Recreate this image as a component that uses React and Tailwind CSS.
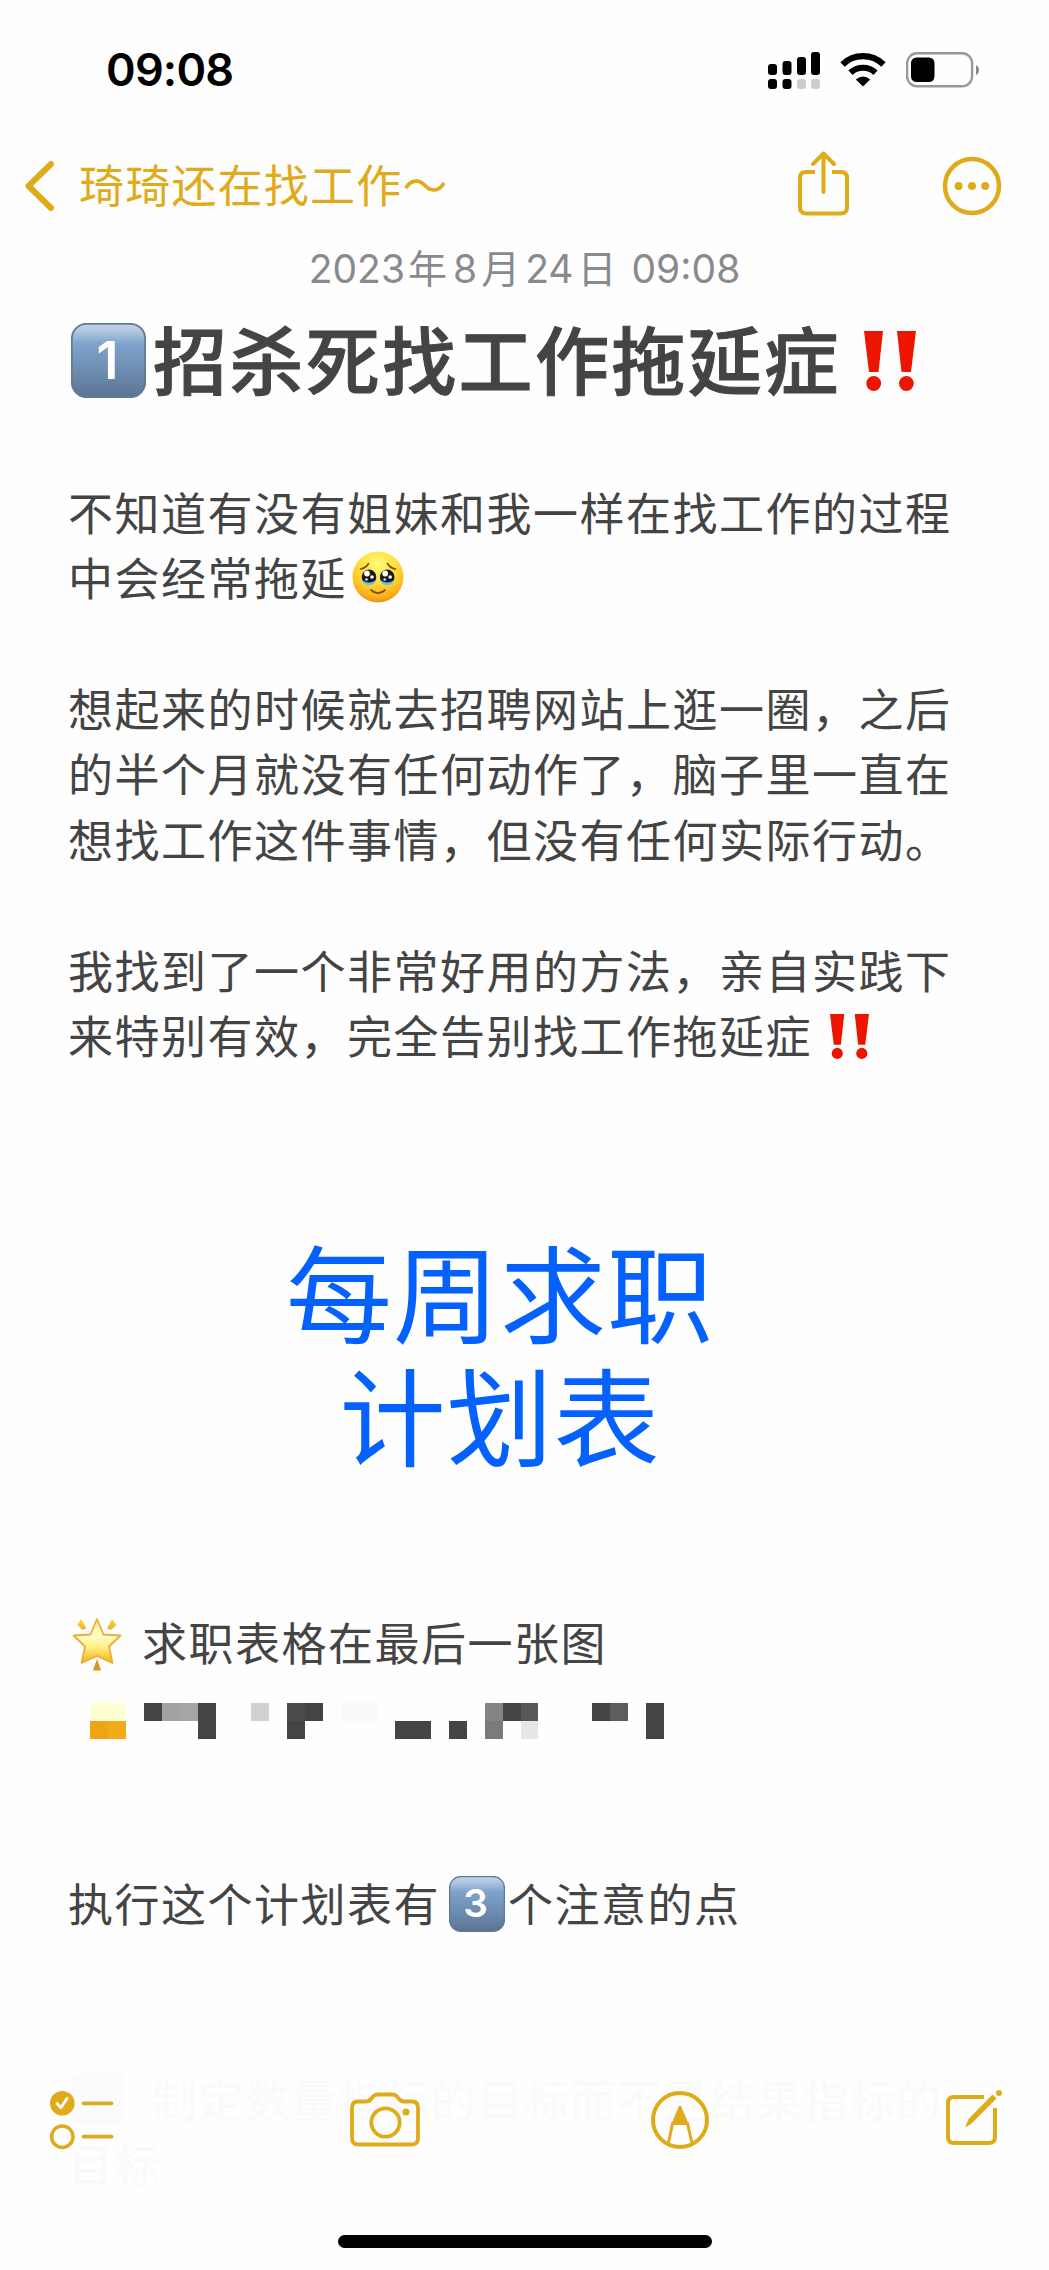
import { useId } from 'react';

const INTRO = [
  ['不知道有没有姐妹和我一样在找工作的过程'],
  ['中会经常拖延', 'tearful'],
  [],
  ['想起来的时候就去招聘网站上逛一圈，之后'],
  ['的半个月就没有任何动作了，脑子里一直在'],
  ['想找工作这件事情，但没有任何实际行动。'],
  [],
  ['我找到了一个非常好用的方法，亲自实践下'],
  ['来特别有效，完全告别找工作拖延症', 'bangs'],
];

// column, row, rows spanned, colour
const MOSAIC = [
  [0, 0, 1, '#ffffd2'],
  [1, 0, 1, '#ffffd6'],
  [0, 1, 1, '#eda514'],
  [1, 1, 1, '#f2ab18'],
  [3, 0, 1, '#444444'],
  [4, 0, 1, '#a2a2a2'],
  [5, 0, 1, '#a6a6a6'],
  [6, 0, 2, '#444444'],
  [9, 0, 1, '#d1d1d1'],
  [11, 0, 1, '#4b4b4b'],
  [12, 0, 1, '#444444'],
  [11, 1, 1, '#444444'],
  [14, 0, 1, '#f9f9f9'],
  [15, 0, 1, '#f9f9f9'],
  [17, 1, 1, '#444444'],
  [18, 1, 1, '#444444'],
  [20, 1, 1, '#444444'],
  [22, 0, 1, '#848484'],
  [23, 0, 1, '#444444'],
  [24, 0, 1, '#585858'],
  [22, 1, 1, '#7b7b7b'],
  [24, 1, 1, '#e7e7e7'],
  [28, 0, 1, '#444444'],
  [29, 0, 1, '#5d5d5d'],
  [31, 0, 2, '#444444'],
];

function Keycap({ digit, className }) {
  const id = useId();
  return (
    <svg viewBox="0 0 75 75" className={className}>
      <defs>
        <linearGradient id={id} x1="0" y1="0" x2="0" y2="1">
          <stop offset="0" stopColor="#c3d4e8" />
          <stop offset="0.1" stopColor="#b1c6df" />
          <stop offset="0.27" stopColor="#80a3cc" />
          <stop offset="0.6" stopColor="#6f8fb4" />
          <stop offset="1" stopColor="#5b7590" />
        </linearGradient>
      </defs>
      <rect x="0.8" y="0.8" width="73.4" height="73.4" rx="15" fill={`url(#${id})`} stroke="#5f7a99" strokeWidth="1.8" />
      <text x="36.5" y="55.5" textAnchor="middle" fill="#fff" fontFamily="Inter" fontWeight="600" fontSize="52">
        {digit}
      </text>
    </svg>
  );
}

function Bangs({ className }) {
  return (
    <svg viewBox="0 0 52 60" fill="#ed1500" className={className}>
      <path d="M0 0H19L14.5 41H5Z" />
      <circle cx="9.7" cy="52.5" r="7.4" />
      <path d="M33 0H52L47 41H37.5Z" />
      <circle cx="42.4" cy="52.5" r="7.4" />
    </svg>
  );
}

function TearfulFace({ className }) {
  return (
    <svg viewBox="0 0 52 52" className={className}>
      <defs>
        <radialGradient id="face" cx="0.5" cy="0.25" r="0.78">
          <stop offset="0" stopColor="#fffb7a" />
          <stop offset="0.45" stopColor="#ffdf3d" />
          <stop offset="0.8" stopColor="#fcb421" />
          <stop offset="1" stopColor="#ea8a12" />
        </radialGradient>
      </defs>
      <circle cx="26" cy="26" r="25.5" fill="url(#face)" />
      <path d="M8.5 18Q14 17 16.5 12.5M43.5 18Q38 17 35.5 12.5" fill="none" stroke="#7c4a0b" strokeWidth="1.6" strokeLinecap="round" />
      {[17, 35.2].map((cx) => (
        <g key={cx}>
          <ellipse cx={cx} cy="26" rx="7.3" ry="7.4" fill="#1b1918" />
          <path d={`M${cx - 7} 29Q${cx} 34 ${cx + 7} 29Q${cx + 6} 34 ${cx} 34.3Q${cx - 6} 34 ${cx - 7} 29Z`} fill="#5cc7ef" />
          <circle cx={cx - 2} cy="22.5" r="2.9" fill="#fff" />
          <circle cx={cx + 3} cy="26" r="1.8" fill="#fff" />
          <circle cx={cx - 2.5} cy="28.5" r="1.3" fill="#d8eefc" />
        </g>
      ))}
      <path d="M19 39Q26 45.5 33 39" fill="none" stroke="#8a4b05" strokeWidth="1.8" strokeLinecap="round" />
    </svg>
  );
}

function GlowingStar({ className }) {
  return (
    <svg viewBox="0 0 50 54" className={className}>
      <defs>
        <linearGradient id="star" x1="0" y1="0" x2="0" y2="1">
          <stop offset="0" stopColor="#fff3a0" />
          <stop offset="0.4" stopColor="#fffbc8" />
          <stop offset="0.65" stopColor="#fff07c" />
          <stop offset="1" stopColor="#f5ae20" />
        </linearGradient>
        <linearGradient id="ray" x1="0" y1="0" x2="0" y2="1">
          <stop offset="0" stopColor="#fdd835" />
          <stop offset="1" stopColor="#e8b42c" />
        </linearGradient>
      </defs>
      <path
        d="M25 2L31.5 17.5L48.5 18.5L37 29.5L40.5 46L25 39L9.5 46L13 29.5L1.5 18.5L18.500 17.500Z"
        fill="url(#star)"
        stroke="#ecae35"
        strokeWidth="1.8"
        strokeLinejoin="round"
      />
      <path d="M9 2L14.5 11.5L10.5 13L5.5 8Z" fill="url(#ray)" />
      <path d="M40 2L35 11.5L39 13L44.5 8Z" fill="url(#ray)" />
      <path d="M25 42L29 53.5H21Z" fill="#e58e1c" />
    </svg>
  );
}

function SignalIcon() {
  return (
    <svg viewBox="0 0 52 37" className="h-[37px] w-[52px]">
      <rect x="0" y="12" width="9" height="11" rx="3" />
      <rect x="14.5" y="9" width="9" height="14" rx="3" />
      <rect x="29" y="5" width="9" height="18" rx="3" />
      <rect x="43" y="0" width="9" height="23" rx="3" />
      <rect x="0" y="27" width="9" height="10" rx="3" />
      <rect x="14.5" y="27" width="9" height="10" rx="3" />
      <rect x="29" y="27" width="9" height="10" rx="3" fill="#cccccc" />
      <rect x="43" y="27" width="9" height="10" rx="3" fill="#cccccc" />
    </svg>
  );
}

function WifiIcon() {
  return (
    <svg viewBox="0 0 46 34" className="h-[34px] w-[46px]">
      <path d="M2.500 11.500A29.500 29.500 0 0 1 43.500 11.500" fill="none" stroke="#000" strokeWidth="6.200" />
      <path d="M10.500 19.800A18 18 0 0 1 35.500 19.800" fill="none" stroke="#000" strokeWidth="6.200" />
      <path d="M15.800 26.500Q23 20.500 30.200 26.500L23 33.500Z" />
    </svg>
  );
}

function BatteryIcon() {
  return (
    <svg viewBox="0 0 74 36" className="h-9 w-[74px]">
      <rect x="1.1" y="1.3" width="65" height="33" rx="10" fill="none" stroke="#999" strokeWidth="2.4" />
      <rect x="5" y="5.5" width="23.500" height="24.500" rx="5.5" />
      <path d="M70 13Q73 14.500 73 18T70 23Z" fill="#888" />
    </svg>
  );
}

function StatusBar() {
  return (
    <div className="flex h-[140px] items-center pr-[69px] pl-[106px]">
      <span className="font-[Inter] text-[45px] font-semibold tracking-[-0.8px] text-black">09:08</span>
      <div className="ml-auto flex items-center">
        <SignalIcon />
        <span className="ml-5 flex">
          <WifiIcon />
        </span>
        <span className="ml-5 flex">
          <BatteryIcon />
        </span>
      </div>
    </div>
  );
}

function NavBar() {
  return (
    <div className="flex h-[92px] items-center pr-[47px] pl-[25px] text-[#e0ab1a]">
      <svg viewBox="0 0 30 52" className="h-[52px] w-[30px]" fill="none" stroke="currentColor" strokeWidth="6" strokeLinecap="round" strokeLinejoin="round">
        <path d="M26 4L3.500 26L26 48" />
      </svg>
      <span className="mb-[4px] ml-[24px] text-[45px] tracking-[1.2px] whitespace-nowrap">琦琦还在找工作～</span>
      <svg viewBox="0 0 52 66" className="mb-[4px] ml-auto h-[66px] w-[52px]" fill="none" stroke="currentColor" strokeWidth="4" strokeLinecap="round" strokeLinejoin="round">
        <path d="M17 21H8Q2 21 2 27V56Q2 62.500 8 62.500H43Q49 62.500 49 56V27Q49 21 43 21H34" strokeLinecap="butt" />
        <path d="M25.500 41V3M15 13L25.500 2.500L36 13" />
      </svg>
      <svg viewBox="0 0 60 60" className="ml-[92px] size-[60px]" fill="currentColor">
        <circle cx="30" cy="30" r="27" fill="none" stroke="currentColor" strokeWidth="4.500" />
        <circle cx="16.600" cy="30" r="4" />
        <circle cx="30" cy="30" r="4" />
        <circle cx="43.300" cy="30" r="4" />
      </svg>
    </div>
  );
}

function Line({ children, className = '' }) {
  return <div className={`flex h-[65.4px] items-center pb-[3px] leading-[60px] whitespace-nowrap ${className}`}>{children}</div>;
}

function Toolbar() {
  return (
    <div className="absolute inset-x-0 bottom-0 flex h-[200px] flex-col text-[#e0ab1a]">
      <div className="flex h-[100px] items-center justify-between pr-[47px] pl-[49px]">
        <svg viewBox="0 0 66 60" className="h-[60px] w-[66px]" fill="none" stroke="currentColor" strokeWidth="3.800" strokeLinecap="round" strokeLinejoin="round">
          <circle cx="13.300" cy="13.300" r="12.300" fill="currentColor" stroke="none" />
          <path d="M8 13.500L11.800 17.800L18 8.500" stroke="#fff" strokeWidth="2.800" />
          <circle cx="13.300" cy="46.700" r="10.700" strokeWidth="3.500" />
          <path d="M34.500 13.300H62.500M34.500 46.700H62.500" />
        </svg>
        <svg viewBox="0 0 70 56" className="mr-[-5px] ml-[1px] h-[56px] w-[70px]" fill="none" stroke="currentColor" strokeWidth="3.800">
          <path d="M2 16Q2 9.500 8 9.500H16Q19 9.500 21 7L23.500 4Q25 2.500 28 2.500H42Q45 2.500 46.500 4L49 7Q51 9.500 54 9.500H62Q68 9.500 68 16V46Q68 52.500 62 52.500H8Q2 52.500 2 46Z" />
          <circle cx="35.500" cy="30.500" r="14.200" />
          <circle cx="56" cy="20" r="3.500" fill="currentColor" stroke="none" />
        </svg>
        <svg viewBox="0 0 60 60" className="ml-[2px] size-[60px]" fill="none" stroke="currentColor" strokeWidth="4">
          <circle cx="30" cy="30" r="27" />
          <path d="M18.500 53L22.500 33.500H37.500L42 53" strokeWidth="3" />
          <path d="M30 15.500Q31 15.500 31.500 17L38 32.500V34H22V32.500L28.500 17Q29 15.500 30 15.500Z" fill="currentColor" stroke="none" />
        </svg>
        <svg viewBox="0 0 60 60" className="-mr-[2px] size-[60px]" fill="none" stroke="currentColor" strokeWidth="4">
          <path d="M40 7H10Q4 7 4 13V47Q4 53 10 53H45Q51 53 51 47V18" />
          <path d="M48.500 4.500L52.500 8.500L27 34L21 37.500L24.500 29Z" fill="currentColor" stroke="none" />
          <circle cx="55" cy="3" r="3" fill="currentColor" stroke="none" />
        </svg>
      </div>
      <div className="mx-auto mt-[65px] h-[13px] w-[374px] rounded-full bg-black" />
    </div>
  );
}

export default function App() {
  return (
    <div className="relative h-[2270px] w-[1049px] overflow-hidden bg-[#fefefe] font-['Noto_Sans_CJK_SC',sans-serif] text-[#444444]">
      <StatusBar />
      <NavBar />
      <div className="flex h-[74px] items-center justify-center font-[Inter,'Noto_Sans_CJK_SC',sans-serif] text-[39px] text-[#8a8a8e]">
        <span>
          2023<span className="mr-[6px] ml-[3px]">年</span>8<span className="mr-[5px] ml-[4px]">月</span>24
          <span className="mr-[4px] ml-[4px]">日</span> 09:08
        </span>
      </div>
      <h1 className="flex h-[106px] items-center pl-[71px] text-[74px] font-medium whitespace-nowrap">
        <Keycap digit="1" className="mt-[2px] size-[75px]" />
        <span className="mb-[6px] ml-[7px] tracking-[2.4px] [-webkit-text-stroke:1px_#444444]">招杀死找工作拖延症</span>
        <Bangs className="mt-[3px] ml-[23px] h-[60px] w-[52px]" />
      </h1>

      <main className="pl-[68px] text-[45px] tracking-[1.5px]">
        <div className="pt-[68.6px]">
          {INTRO.map(([text, emoji], i) => (
            <Line key={i}>
              {text}
              {emoji === 'tearful' && <TearfulFace className="ml-[5px] size-[52px]" />}
              {emoji === 'bangs' && <Bangs className="mt-[3px] ml-[18px] h-[45px] w-[39px]" />}
            </Line>
          ))}
        </div>

        <div className="mt-[159px] mb-[137px] -ml-[68px] w-[1000px] text-center text-[106px] leading-[123px] tracking-[1px] text-[#0561fe]">
          <p>每周求职</p>
          <p>计划表</p>
        </div>

        <Line>
          <GlowingStar className="mt-[3px] ml-[4px] h-[54px] w-[50px]" />
          <span className="ml-[20px]">求职表格在最后一张图</span>
        </Line>
        <div className="mt-[26px] ml-[22px] grid h-9 w-[574px] grid-cols-[repeat(32,1fr)] grid-rows-2">
          {MOSAIC.map(([col, row, span, color]) => (
            <div
              key={`${col}-${row}`}
              style={{ gridColumn: col + 1, gridRow: `${row + 1} / span ${span}`, backgroundColor: color }}
            />
          ))}
        </div>
        <Line className="mt-[133px]">
          执行这个计划表有
          <Keycap digit="3" className="mt-[3px] ml-[9px] size-[56px]" />
          <span className="ml-[3px]">个注意的点</span>
        </Line>
        <div className="mt-[131px] text-[#fafafa]">
          <Line>
            <span className="ml-[4px] size-[52px] rounded-lg bg-[#fbfbfd]" />
            <span className="ml-[28px]">制定数量指标的目标而不是结果指标的</span>
          </Line>
          <Line>目标</Line>
        </div>
      </main>
      <Toolbar />
    </div>
  );
}
